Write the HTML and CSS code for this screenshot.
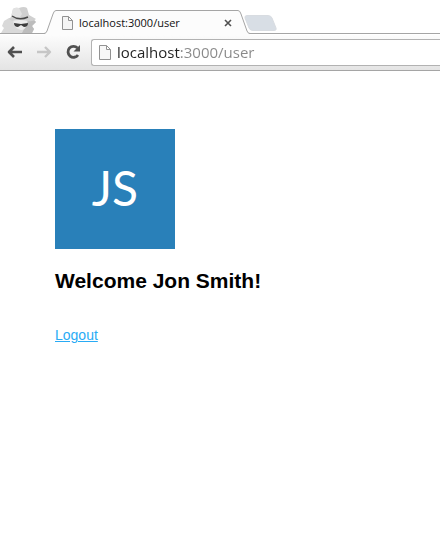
FILE: index.html
```html
<!DOCTYPE html>
<html lang="en">
<head>
<meta charset="utf-8">
<title>localhost:3000/user</title>
<link rel="stylesheet" href="styles.css">
</head>
<body>
<header class="browser">
  <div class="tabs">
    <svg class="incognito" width="40" height="27" viewBox="0 0 40 27" aria-hidden="true">
      <path d="M1 27 L4 22 L2 20 L4 15 L9 12 H31 L34 14 L36 16 L32 20 L34 23 L32 27Z" fill="#d9d9d9"/>
      <path d="M27 14 L34 14 L36 16 L32 20 L34 23 L32 27 H22 L25 21Z" fill="#bdbdbd"/>
      <path d="M13 12 H28 L27 19 Q25 24 21 24 Q16 23 14 19Z" fill="#ececec"/>
      <path d="M11 11 L13 3 Q15 1 19 2 Q24 0 27 2 L29 9 L36 13 Q33 16 28 15 Q19 13 12 15 L9 13Z" fill="#d0d0d0"/>
      <path d="M11 11 L13 3 Q15 1 19 2 L22 8 L20 11Z" fill="#e2e2e2"/>
      <path d="M12 10 Q19 15 28 11" fill="none" stroke="#484848" stroke-width="1.400"/>
      <path d="M14 17 L21 18 L28 17 Q28 21 24 21 L21 19 L18 21 Q14 21 14 17Z" fill="#3d3d3d"/>
    </svg>
    <div class="tab">
      <svg class="tab-edge" width="12" height="25" viewBox="0 0 12 25" aria-hidden="true">
        <path d="M0 25 V24 Q2 24 3 21 L9 4 Q10 .5 12 .5 V25Z" fill="#fcfcfc"/>
        <path d="M0 23.500 Q2 23.500 3 21 L9 4 Q10 .5 12 .5" fill="none" stroke="#a5a5a5"/>
      </svg>
      <div class="tab-body">
        <svg width="11" height="14" viewBox="0 0 11 14" aria-hidden="true"><path d="M.5 .5 H6.500 L10.500 4.500 V13.500 H.5Z M6.500 .5 V4.500 H10.500" fill="#f4f4f4" stroke="#929292"/></svg>
        <span class="tab-title">localhost:3000/user</span>
        <button class="close" type="button" aria-label="Close tab">
          <svg width="8" height="8" viewBox="0 0 8 8"><path d="M1 1 L7 7 M7 1 L1 7" stroke="#505050" stroke-width="1.600"/></svg>
        </button>
      </div>
      <svg class="tab-edge" width="12" height="25" viewBox="0 0 12 25" aria-hidden="true">
        <path d="M0 .5 Q2 .5 3 4 L9 21 Q10 24 12 24 V25 H0Z" fill="#fcfcfc"/>
        <path d="M0 .5 Q2 .5 3 4 L9 21 Q10 23.500 12 23.500" fill="none" stroke="#a5a5a5"/>
      </svg>
    </div>
    <button class="new-tab" type="button" aria-label="New tab">
      <svg width="33" height="17" viewBox="0 0 33 17"><path d="M3 .5 H24 Q27 .5 28 3 L32 13 Q33 15.500 30 15.500 H9 Q6 15.500 5 13 L1 3 Q.5 .5 3 .5Z" fill="#d8dee5" stroke="#d8dce1"/></svg>
    </button>
  </div>
  <div class="toolbar">
    <button class="nav" type="button" aria-label="Back">
      <svg width="16" height="14" viewBox="0 0 16 14"><path d="M7 2 L2 7 L7 12 M2 7 H15" fill="none" stroke="#505050" stroke-width="2.600" stroke-linejoin="round"/></svg>
    </button>
    <button class="nav" type="button" aria-label="Forward">
      <svg width="16" height="14" viewBox="0 0 16 14"><path d="M9 2 L14 7 L9 12 M14 7 H1" fill="none" stroke="#c6c6c6" stroke-width="2.400" stroke-linejoin="round"/></svg>
    </button>
    <button class="nav" type="button" aria-label="Reload">
      <svg width="16" height="16" viewBox="0 0 16 16"><path d="M12.500 4 A5.500 5.500 0 1 0 13 11" fill="none" stroke="#505050" stroke-width="2.800"/><path d="M15 1 V7.500 H8.500Z" fill="#505050"/></svg>
    </button>
    <label class="address">
      <svg width="12" height="15" viewBox="0 0 12 15" aria-hidden="true"><path d="M.5 .5 H7.500 L11.500 4.500 V14.500 H.5Z M7.500 .5 V4.500 H11.500" fill="#f7f7f7" stroke="#929292"/></svg>
      <input class="url" type="text" aria-label="Address" value="localhost:3000/user">
    </label>
  </div>
</header>
<main class="page">
  <div class="avatar">JS</div>
  <h1 class="welcome">Welcome Jon Smith!</h1>
  <a class="logout" href="#">Logout</a>
</main>
</body>
</html>
```
FILE: styles.css
```css
* {
  box-sizing: border-box;
}

body {
  margin: 0;
  background: #fff;
  color: #000;
  font-family: "Liberation Sans", Arial, sans-serif;
}

svg {
  display: block;
  flex: none;
}

button {
  border: 0;
  padding: 0;
  background: none;
}

.browser {
  font-family: "Open Sans", "Noto Sans", sans-serif;
}

.tabs {
  display: flex;
  align-items: flex-end;
  height: 35px;
  background: linear-gradient(#a5a5a5, #a5a5a5) 0 33px / 100% 1px no-repeat, #fff;
}

.incognito {
  margin-right: 4px;
  margin-bottom: 2px;
}

.tab {
  display: flex;
  width: 206px;
}

.tab-body {
  display: flex;
  flex: 1;
  align-items: center;
  height: 25px;
  padding: 0 6px;
  border-top: 1px solid #a5a5a5;
  background: #fcfcfc;
}

.tab-title {
  flex: 1;
  margin-left: 6px;
  color: #111;
  font-size: 11px;
  line-height: 16px;
  white-space: nowrap;
}

.new-tab {
  align-self: center;
  margin-top: 11px;
  margin-left: -6px;
}

.toolbar {
  display: flex;
  align-items: center;
  height: 36px;
  padding-bottom: 1px;
  padding-left: 7px;
  gap: 13px;
  border-bottom: 1px solid #a5a5a5;
  background: linear-gradient(#fcfcfc, #e4e4e4);
}

.address {
  display: flex;
  flex: 1;
  align-items: center;
  min-width: 0;
  height: 27px;
  margin-left: -3px;
  padding-left: 7px;
  gap: 6px;
  border: 1px solid #b2b2b2;
  border-right: 0;
  border-radius: 3px 0 0 3px;
  background: #fff;
}

/* The host part of the address is darker than the rest. */
.url {
  flex: 1;
  min-width: 0;
  height: 24px;
  padding: 0;
  border: 0;
  outline: 0;
  background: linear-gradient(90deg, #222 63px, #888 63px);
  background-clip: text;
  -webkit-background-clip: text;
  color: transparent;
  font: 15px/24px "Open Sans", "Noto Sans", sans-serif;
}

.page {
  padding: 58px 55px;
}

.avatar {
  width: 120px;
  height: 120px;
  background: #2980b9;
  color: #fff;
  font: 48px/118px Lato, sans-serif;
  text-align: center;
}

.welcome {
  margin: 20px 0 33px;
  font-size: 21px;
  line-height: 24px;
}

.logout {
  color: #29abf5;
  font-size: 14px;
  line-height: 16px;
}
```
